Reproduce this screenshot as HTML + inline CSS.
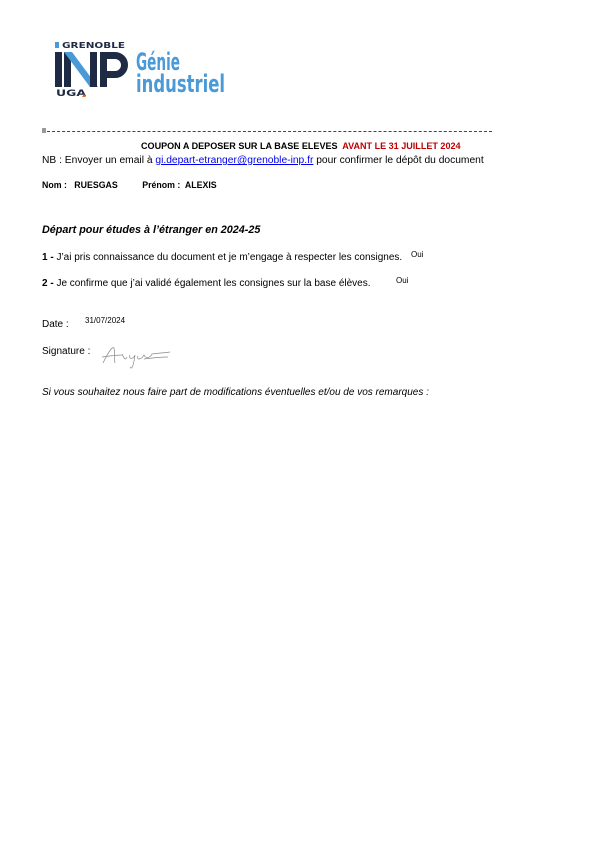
<!DOCTYPE html>
<html><head><meta charset="utf-8"><style>
body{margin:0;background:#fff;width:595px;height:841px;position:relative;overflow:hidden;font-family:"Liberation Sans",sans-serif;color:#000}
.t{position:absolute;white-space:nowrap;font-size:10px;line-height:1}
.a{position:absolute;white-space:nowrap;font-size:8px;line-height:1}
b{font-weight:bold}
</style></head><body>
<svg style="position:absolute;left:0;top:0" width="240" height="105" viewBox="0 0 240 105">
 <rect x="55" y="42" width="4" height="6" fill="#4a9ad8"/>
 <text x="62" y="48" font-family="DejaVu Sans" font-weight="bold" font-size="8" fill="#1f2a44" textLength="63" lengthAdjust="spacingAndGlyphs">GRENOBLE</text>
 <rect x="55" y="52" width="7" height="35" fill="#1f2a44"/>
 <rect x="64" y="52" width="7" height="35" fill="#1f2a44"/>
 <polygon points="64,52 72,52 98,87 90,87" fill="#4a9ad8"/>
 <rect x="90" y="52" width="7" height="35" fill="#1f2a44"/>
 <path d="M103.5 87 V55.5 H115 A9.5 9.5 0 0 1 115 74.5 H107" stroke="#1f2a44" stroke-width="7" fill="none"/>
 <text x="56" y="96" font-family="DejaVu Sans" font-weight="bold" font-size="8.5" fill="#1f2a44" textLength="30" lengthAdjust="spacingAndGlyphs">UGA</text>
 <polygon points="82,97 84,94 86,97" fill="#e06a2c"/>
 <text x="136" y="70" font-family="DejaVu Sans" font-weight="bold" font-size="24" fill="#4a9ad8" textLength="44" lengthAdjust="spacingAndGlyphs">Génie</text>
 <text x="136" y="92" font-family="DejaVu Sans" font-weight="bold" font-size="24" fill="#4a9ad8" textLength="89" lengthAdjust="spacingAndGlyphs">industriel</text>
</svg>

<div style="position:absolute;left:42px;top:131px;width:450px;border-top:1px dashed #444"></div>
<div style="position:absolute;left:42px;top:128px;width:4px;height:5px;background:#999"></div>
<div class="t" style="left:141px;top:142px;font-size:9.05px"><b>COUPON A DEPOSER SUR LA BASE ELEVES&nbsp; <span style="color:#c00000">AVANT LE 31 JUILLET 2024</span></b></div>
<div class="t" style="left:42px;top:156px;font-size:10.25px">NB : Envoyer un email à <span style="color:#0000ee;text-decoration:underline">gi.depart-etranger@grenoble-inp.fr</span> pour confirmer le dépôt du document</div>
<div class="t" style="left:42px;top:181px;font-size:8.8px"><b>Nom :&nbsp;&nbsp; RUESGAS&nbsp;&nbsp;&nbsp;&nbsp;&nbsp;&nbsp;&nbsp;&nbsp;&nbsp; Prénom :&nbsp; ALEXIS</b></div>
<div class="t" style="left:42px;top:225px;font-size:10.8px"><b><i>Départ pour études à l’étranger en 2024-25</i></b></div>
<div class="t" style="left:42px;top:253px"><b>1 -</b> J’ai pris connaissance du document et je m’engage à respecter les consignes.</div>
<div class="a" style="left:411px;top:251px">Oui</div>
<div class="t" style="left:42px;top:279px"><b>2 -</b> Je confirme que j’ai validé également les consignes sur la base élèves.</div>
<div class="a" style="left:396px;top:277px">Oui</div>
<div class="t" style="left:42px;top:320px">Date :</div>
<div class="a" style="left:85px;top:317px">31/07/2024</div>
<div class="t" style="left:42px;top:347px">Signature :</div>
<svg style="position:absolute;left:100px;top:343px" width="75" height="30" viewBox="0 0 75 30"><path d="M3 20 C8 10 12 3 14 5 C15 10 14 16 15 20 M2 14 C10 13 16 12 22 12 M22 11 C24 15 25 18 27 14 M30 12 C28 16 33 17 35 12 C34 20 32 28 30 24 M38 13 C36 18 42 16 44 12 C46 16 50 15 52 11 C58 10 64 10 70 9 M44 16 C52 15 60 14 68 14" stroke="#888" stroke-width="0.7" fill="none"/></svg>
<div class="t" style="left:42px;top:388px"><i>Si vous souhaitez nous faire part de modifications éventuelles et/ou de vos remarques :</i></div>
</body></html>
